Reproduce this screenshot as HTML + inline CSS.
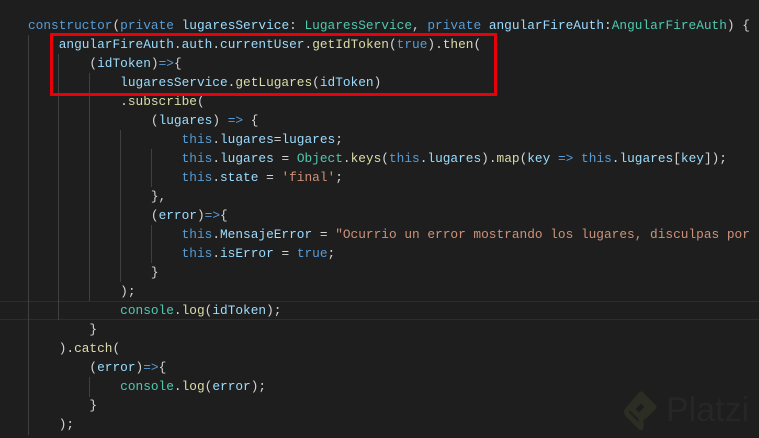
<!DOCTYPE html>
<html><head><meta charset="utf-8"><style>
html,body{margin:0;padding:0;background:#1e1e1e;width:759px;height:438px;overflow:hidden;position:relative}
.l{position:absolute;left:28px;white-space:pre;font-family:"Liberation Mono",monospace;font-size:12.8px;line-height:19px;color:#d4d4d4}
.k{color:#569cd6}.v{color:#9cdcfe}.f{color:#dcdcaa}.t{color:#4ec9b0}.s{color:#ce9178}
.g{position:absolute;width:1px;background:#404040}
.box{position:absolute;left:50px;top:33px;width:441px;height:57px;border:3.5px solid #e8000b}
.cur{position:absolute;left:0;top:301px;width:759px;height:17px;border-top:1px solid #2d2d2d;border-bottom:1px solid #2d2d2d}
</style></head><body>
<div class="cur"></div>
<div class="g" style="left:28px;top:35px;height:400px"></div>
<div class="g" style="left:58px;top:54px;height:266px"></div>
<div class="g" style="left:89px;top:73px;height:228px"></div>
<div class="g" style="left:120px;top:130px;height:152px"></div>
<div class="g" style="left:151px;top:149px;height:38px"></div>
<div class="g" style="left:151px;top:225px;height:38px"></div>
<div class="g" style="left:89px;top:377px;height:20px"></div>
<div class="l" style="top:16px"><span class="k">constructor</span>(<span class="k">private</span> <span class="v">lugaresService</span>: <span class="t">LugaresService</span>, <span class="k">private</span> <span class="v">angularFireAuth</span>:<span class="t">AngularFireAuth</span>) {</div>
<div class="l" style="top:35px">    <span class="v">angularFireAuth</span>.<span class="v">auth</span>.<span class="v">currentUser</span>.<span class="f">getIdToken</span>(<span class="k">true</span>).<span class="f">then</span>(</div>
<div class="l" style="top:54px">        (<span class="v">idToken</span>)<span class="k">=&gt;</span>{</div>
<div class="l" style="top:73px">            <span class="v">lugaresService</span>.<span class="f">getLugares</span>(<span class="v">idToken</span>)</div>
<div class="l" style="top:92px">            .<span class="f">subscribe</span>(</div>
<div class="l" style="top:111px">                (<span class="v">lugares</span>) <span class="k">=&gt;</span> {</div>
<div class="l" style="top:130px">                    <span class="k">this</span>.<span class="v">lugares</span>=<span class="v">lugares</span>;</div>
<div class="l" style="top:149px">                    <span class="k">this</span>.<span class="v">lugares</span> = <span class="t">Object</span>.<span class="f">keys</span>(<span class="k">this</span>.<span class="v">lugares</span>).<span class="f">map</span>(<span class="v">key</span> <span class="k">=&gt;</span> <span class="k">this</span>.<span class="v">lugares</span>[<span class="v">key</span>]);</div>
<div class="l" style="top:168px">                    <span class="k">this</span>.<span class="v">state</span> = <span class="s">'final'</span>;</div>
<div class="l" style="top:187px">                },</div>
<div class="l" style="top:206px">                (<span class="v">error</span>)<span class="k">=&gt;</span>{</div>
<div class="l" style="top:225px">                    <span class="k">this</span>.<span class="v">MensajeError</span> = <span class="s">"Ocurrio un error mostrando los lugares, disculpas por</span></div>
<div class="l" style="top:244px">                    <span class="k">this</span>.<span class="v">isError</span> = <span class="k">true</span>;</div>
<div class="l" style="top:263px">                }</div>
<div class="l" style="top:282px">            );</div>
<div class="l" style="top:301px">            <span class="t">console</span>.<span class="f">log</span>(<span class="v">idToken</span>);</div>
<div class="l" style="top:320px">        }</div>
<div class="l" style="top:339px">    ).<span class="f">catch</span>(</div>
<div class="l" style="top:358px">        (<span class="v">error</span>)<span class="k">=&gt;</span>{</div>
<div class="l" style="top:377px">            <span class="t">console</span>.<span class="f">log</span>(<span class="v">error</span>);</div>
<div class="l" style="top:396px">        }</div>
<div class="l" style="top:415px">    );</div>
<div class="box"></div>
<svg style="position:absolute;left:624px;top:390px" width="36" height="44" viewBox="0 0 36 44"><path d="M17 4 L30 17 L20 27 L17 24 L24 17 L17 10 L8 19 L17 28 L17 38 L4 25 Q1 22 4 19 Z" fill="none" stroke="#2c2e24" stroke-width="5" stroke-linejoin="round"/></svg>
<div style="position:absolute;left:666px;top:391px;font-family:'Liberation Sans',sans-serif;font-size:34px;color:#262626">Platzi</div>
</body></html>
